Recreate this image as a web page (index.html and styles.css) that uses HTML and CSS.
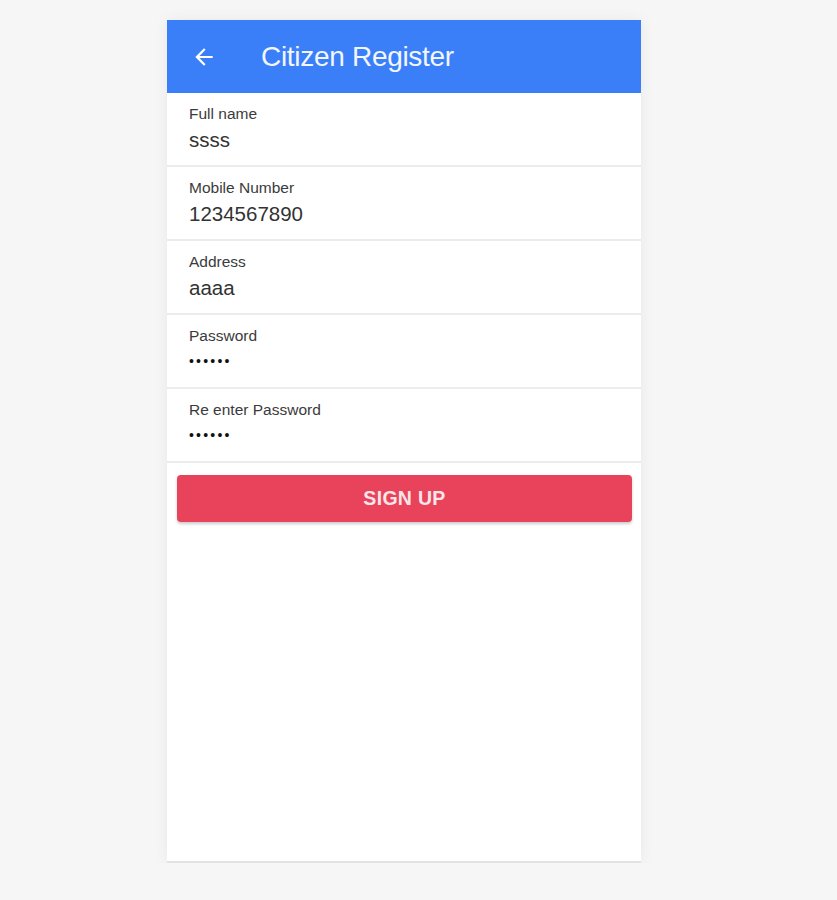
FILE: index.html
```html
<!doctype html>
<html lang="en">
	<head>
		<meta charset="UTF-8">
		<title>Citizen Register</title>
		<link rel="stylesheet" href="styles.css">
	</head>

	<body>
		<div class="phone">
			<div class="header">
				<button class="back">
					<svg width="24" height="24" viewBox="0 0 24 24"><path d="M20 11H7.83l5.59-5.59L12 4l-8 8 8 8 1.41-1.41L7.83 13H20v-2z" fill="#fff"/></svg>
				</button>
				<h1>Citizen Register</h1>
			</div>

			<div class="field">
				<label>Full name</label>
				<div class="value">ssss</div>
			</div>
			<div class="field">
				<label>Mobile Number</label>
				<div class="value">1234567890</div>
			</div>
			<div class="field">
				<label>Address</label>
				<div class="value">aaaa</div>
			</div>
			<div class="field">
				<label>Password</label>
				<div class="value dots">••••••</div>
			</div>
			<div class="field">
				<label>Re enter Password</label>
				<div class="value dots">••••••</div>
			</div>

			<div class="actions">
				<button class="signup">SIGN UP</button>
			</div>
		</div>
	</body>
</html>
```

FILE: styles.css
```css
* {
	padding: 0;
	margin: 0;
	box-sizing: border-box;
}
body {
	background-color: #f6f6f6;
	font-family: "Liberation Sans", Arial, sans-serif;
	color: #333;
}
.phone {
	width: 474px;
	height: 843px;
	margin: 20px 0 0 167px;
	background-color: #fff;
	border-bottom: 2px solid #e2e2e2;
	box-shadow: 0 0 14px rgba(0, 0, 0, 0.06);
}
.header {
	display: flex;
	align-items: center;
	height: 73px;
	background-color: #3a7ff7;
	padding-left: 24px;
}
.back {
	background: none;
	border: none;
	display: flex;
	width: 26px;
	height: 26px;
}
.back svg {
	width: 26px;
	height: 26px;
}
.header h1 {
	color: #f2f6ff;
	font-size: 28px;
	font-weight: normal;
	margin-left: 44px;
	letter-spacing: -0.3px;
}
.field {
	height: 74px;
	padding: 11px 22px 0;
	border-bottom: 2px solid #ececec;
}
.field label {
	display: block;
	font-size: 15.5px;
	color: #3b3b3b;
	line-height: 19px;
}
.value {
	font-size: 20.5px;
	line-height: 25px;
	margin-top: 4px;
	color: #333;
}
.dots {
	font-size: 14px;
	color: #111;
	letter-spacing: 2.2px;
}
.actions {
	padding: 12px 9px 0 10px;
}
.signup {
	width: 100%;
	height: 47px;
	background-color: #e8435a;
	color: #fbe5e8;
	border: none;
	border-radius: 4px;
	font-family: "Liberation Sans", Arial, sans-serif;
	font-weight: bold;
	font-size: 19.5px;
	letter-spacing: 0.3px;
	box-shadow: 0 2px 3px rgba(0, 0, 0, 0.2);
}
```
